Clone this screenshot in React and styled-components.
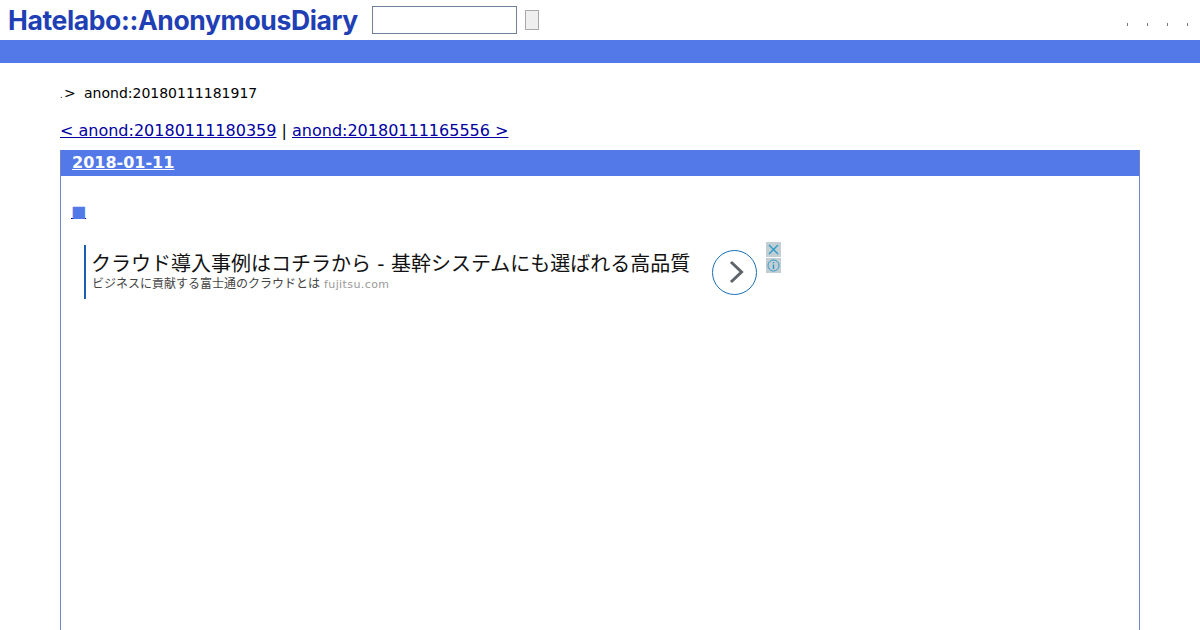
import React from 'react';
import styled, { createGlobalStyle } from 'styled-components';

const Global = createGlobalStyle`
    html, body {
        margin: 0;
        padding: 0;
        height: 630px;
        overflow: hidden;
        background: #fff;
        font-family: "DejaVu Sans", "Noto Sans CJK JP", sans-serif;
        color: #000;
    }
`;

const Header = styled.header`
    display: flex;
    align-items: center;
    height: 40px;
    padding-left: 8px;
`;

const Logo = styled.a`
    width: 350px;
    margin-right: 14px;
    font-family: "Inter", sans-serif;
    font-weight: 700;
    font-size: 26.5px;
    letter-spacing: -0.37px;
    line-height: 40px;
    white-space: nowrap;
    color: #1f40b4;
    text-decoration: none;
`;

const SearchInput = styled.input`
    box-sizing: border-box;
    width: 145px;
    height: 28px;
    margin: 0 8px 0 0;
    padding: 0;
    border: 1px solid #6f7f9c;
    background: #fff;
`;

const SearchButton = styled.button`
    box-sizing: border-box;
    width: 14px;
    height: 20px;
    padding: 0;
    border: 1px solid #a9a9a9;
    background: #efefef;
`;

const Dots = styled.div`
    display: flex;
    gap: 19px;
    margin-left: auto;
    margin-right: 12px;
    padding-top: 8px;
`;

const Dot = styled.span`
    width: 1px;
    height: 3px;
    background: #777;
`;

const Bar = styled.div`
    height: 23px;
    background: #5279e7;
`;

const Main = styled.main`
    padding: 0 60px;
`;

const Crumbs = styled.div`
    display: flex;
    align-items: baseline;
    height: 17px;
    margin-top: 22px;
    font-size: 14px;
    line-height: 17px;
`;

const CrumbDot = styled.span`
    width: 4px;
    font-size: 8px;
`;

const CrumbArrow = styled.span`
    width: 20px;
`;

const Pager = styled.div`
    height: 19px;
    margin-top: 19px;
    font-size: 16px;
    line-height: 19px;
`;

const PagerLink = styled.a`
    color: #0000a0;
    text-decoration: underline;
`;

const Day = styled.section`
    box-sizing: border-box;
    height: 480px;
    margin-top: 10px;
    border: 1px solid #5279e7;
    border-bottom: none;
    border-left-color: #6f86c8;
    border-right-color: #6f86c8;
`;

const DayTitle = styled.h2`
    height: 25px;
    margin: 0;
    padding-left: 11px;
    background: #5279e7;
    font-size: 16px;
    font-weight: 700;
    line-height: 23px;
`;

const DayLink = styled.a`
    color: #fff;
    text-decoration: underline;
`;

const Body = styled.div`
    padding: 26px 0 0 10px;
`;

const Mark = styled.a`
    display: block;
    font-size: 16px;
    line-height: 19px;
    height: 19px;
    color: #5279e7;
    text-decoration: underline;
    text-decoration-color: #0000a0;
`;

const Ad = styled.div`
    position: relative;
    display: flex;
    align-items: center;
    width: 697px;
    height: 54px;
    margin: 24px 0 0 13px;
`;

const AdText = styled.div`
    width: 628px;
    height: 54px;
    box-sizing: border-box;
    padding-left: 5px;
    border-left: 2px solid #1a5fb4;
`;

const AdTitle = styled.div`
    margin-top: 7px;
    font-family: "DejaVu Sans", "Noto Sans CJK JP", sans-serif;
    font-size: 20px;
    line-height: 24px;
    white-space: nowrap;
    color: #111;
`;

const AdSub = styled.div`
    padding-left: 1px;
    font-family: "Noto Sans CJK JP", sans-serif;
    font-size: 12px;
    line-height: 14px;
    white-space: nowrap;
    color: #444;
`;

const AdHost = styled.span`
    margin-left: 4px;
    font-family: "DejaVu Sans", sans-serif;
    font-size: 11px;
    letter-spacing: 0.4px;
    color: #999;
`;

const AdButton = styled.div`
    display: flex;
    align-items: center;
    justify-content: center;
    box-sizing: border-box;
    width: 45px;
    height: 45px;
    border: 1px solid #1a6fb4;
    border-radius: 50%;
`;

const AdBadges = styled.div`
    position: absolute;
    top: -3px;
    right: 0;
    display: flex;
    flex-direction: column;
    gap: 1px;
`;

const AdBadge = styled.div`
    display: flex;
    align-items: center;
    justify-content: center;
    width: 15px;
    height: 15px;
    background: #c3ced3;
`;

export default function App() {
    return (
        <>
            <Global />
            <Header>
                <Logo>Hatelabo::AnonymousDiary</Logo>
                <SearchInput />
                <SearchButton />
                <Dots>
                    <Dot />
                    <Dot />
                    <Dot />
                    <Dot />
                </Dots>
            </Header>
            <Bar />
            <Main>
                <Crumbs>
                    <CrumbDot>.</CrumbDot>
                    <CrumbArrow>&gt;</CrumbArrow>
                    anond:20180111181917
                </Crumbs>
                <Pager>
                    <PagerLink>&lt; anond:20180111180359</PagerLink>
                    {' | '}
                    <PagerLink>anond:20180111165556 &gt;</PagerLink>
                </Pager>
                <Day>
                    <DayTitle><DayLink>2018-01-11</DayLink></DayTitle>
                    <Body>
                        <Mark>■</Mark>
                        <Ad>
                            <AdText>
                                <AdTitle>クラウド導入事例はコチラから - 基幹システムにも選ばれる高品質</AdTitle>
                                <AdSub>ビジネスに貢献する富士通のクラウドとは<AdHost>fujitsu.com</AdHost></AdSub>
                            </AdText>
                            <AdButton>
                                <svg width="18" height="24" viewBox="0 0 18 24">
                                    <path d="M5 2 L15.5 12 L5 22" fill="none" stroke="#5f6468" strokeWidth="3" />
                                </svg>
                            </AdButton>
                            <AdBadges>
                                <AdBadge>
                                    <svg width="11" height="11" viewBox="0 0 11 11">
                                        <path d="M1 1 L10 10 M10 1 L1 10" stroke="#2a9ac8" strokeWidth="1.4" />
                                    </svg>
                                </AdBadge>
                                <AdBadge>
                                    <svg width="13" height="13" viewBox="0 0 13 13">
                                        <circle cx="6.5" cy="6.5" r="5.5" fill="none" stroke="#2a9ac8" />
                                        <path d="M6.5 5.5 V10 M6.5 3 V4.3" stroke="#2a9ac8" strokeWidth="1.4" />
                                    </svg>
                                </AdBadge>
                            </AdBadges>
                        </Ad>
                    </Body>
                </Day>
            </Main>
        </>
    );
}
